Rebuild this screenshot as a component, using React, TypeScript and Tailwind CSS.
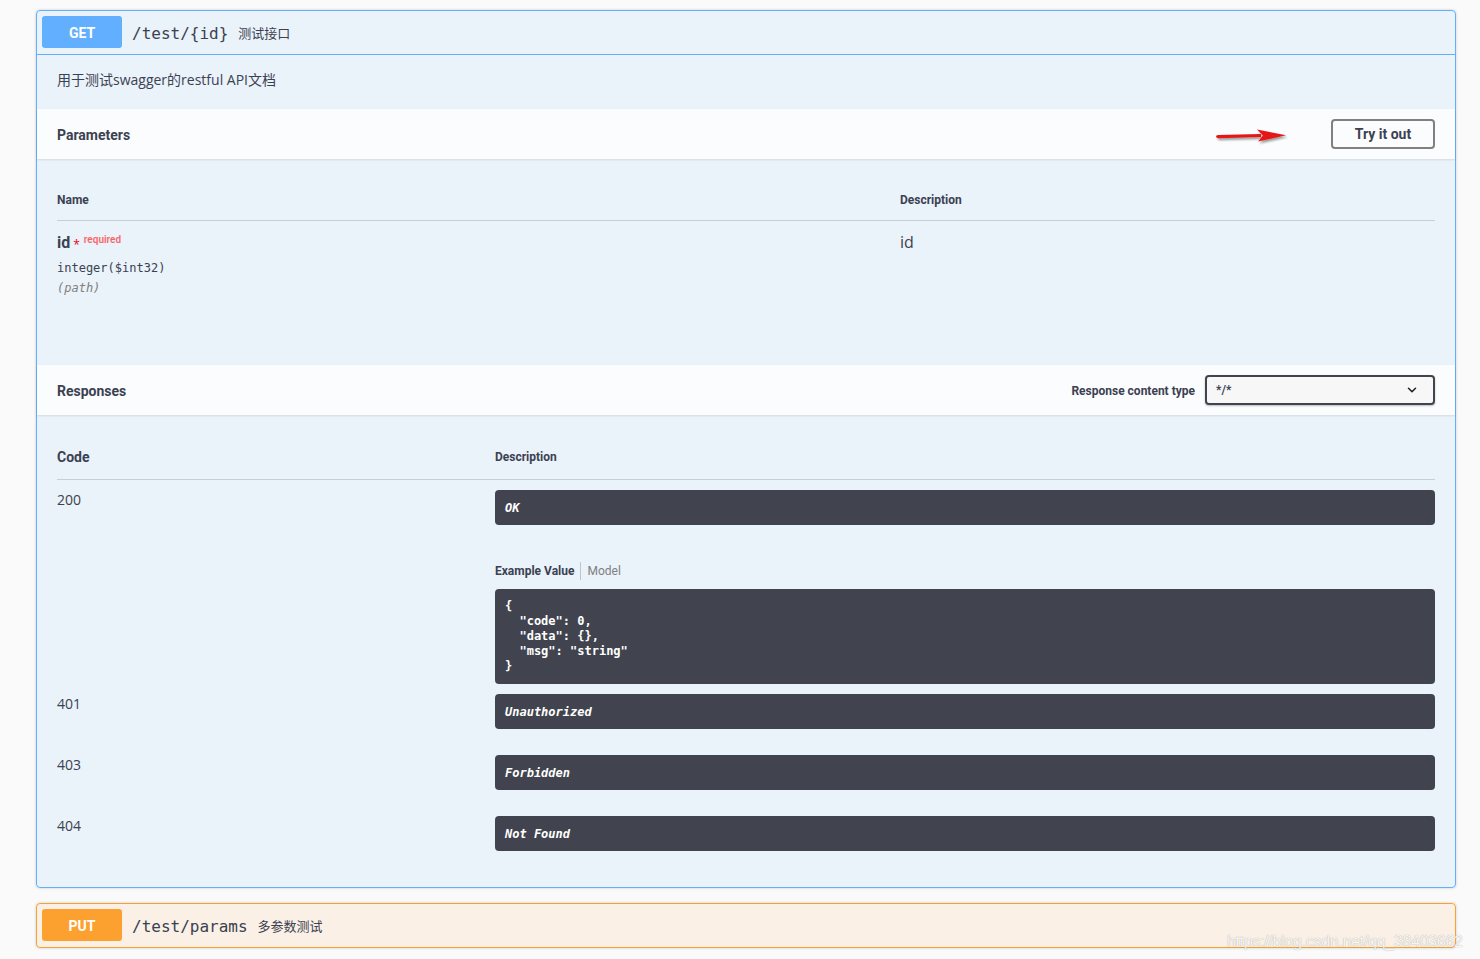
import React from "react";
import { ChevronDown } from "lucide-react";

const sans = "font-['Open_Sans','Noto_Sans_CJK_SC',sans-serif]";
const title = "font-['Roboto','Noto_Sans_CJK_SC',sans-serif]";
const mono = "font-['DejaVu_Sans_Mono',monospace]";

function RespBox({ text }: { text: string }) {
  return (
    <div className={`h-[35px] rounded-[4px] bg-[#41444e] px-[10px] flex items-center text-white text-[12px] font-bold italic ${mono}`}>
      {text}
    </div>
  );
}

function Arrow() {
  return (
    <svg width="76" height="20" viewBox="0 0 76 20" className="mr-[40px] mt-[6px]">
      <defs>
        <filter id="sh" x="-10%" y="-50%" width="130%" height="220%">
          <feDropShadow dx="1.5" dy="2" stdDeviation="1.2" floodColor="#000" floodOpacity="0.4" />
        </filter>
      </defs>
      <g filter="url(#sh)">
        <path d="M1 9.6 Q1 8.2 3 8 L46 7 L46 10 L3 11.2 Q1 11 1 9.6 Z" fill="#e51515" />
        <path d="M42 2.5 L71 8.2 L43 14.5 L48 8.6 Z" fill="#e51515" />
      </g>
    </svg>
  );
}

export default function App() {
  return (
    <div className={`relative min-h-[959px] overflow-hidden bg-[#fafafa] pl-[36px] pr-[24px] pt-[10px] text-[#3b4151] ${sans}`}>
      {/* GET block */}
      <div className="rounded-[4px] border border-[#61affe] bg-[#61affe]/10 shadow-[0_0_3px_rgba(0,0,0,0.19)]">
        <div className="flex items-center pt-[5px] pb-[6px] px-[5px] border-b border-[#61affe]">
          <span className={`w-[80px] h-[32px] pt-[3px] rounded-[3px] bg-[#61affe] text-white font-bold text-[14px] flex items-center justify-center ${title}`}>
            GET
          </span>
          <span className={`pl-[10px] pt-[3px] text-[16px] ${mono}`}>/test/{"{id}"}</span>
          <span className="pl-[10px] pt-[3px] text-[13px]">测试接口</span>
        </div>

        <div className="px-[20px] pt-[13px] pb-[17px] text-[14px] leading-[24px]">用于测试swagger的restful API文档</div>

        <div className="flex items-center min-h-[50px] px-[20px] py-[8px] bg-white/80 shadow-[0_1px_2px_rgba(0,0,0,0.1)]">
          <span className={`pt-[2px] text-[14px] font-bold ${title}`}>Parameters</span>
          <div className="ml-auto flex items-center">
            <Arrow />
            <button className={`w-[104px] h-[30px] rounded-[4px] border-2 border-[#808080] bg-transparent text-[14px] font-bold text-[#3b4151] ${title}`}>
              Try it out
            </button>
          </div>
        </div>

        <div className="h-[206px] px-[20px] pt-[21px]">
          <div className="flex border-b border-[#3b4151]/20 py-[12px]">
            <div className={`w-[843px] text-[12px] leading-[16px] font-bold ${title}`}>Name</div>
            <div className={`text-[12px] leading-[16px] font-bold ${title}`}>Description</div>
          </div>
          <div className="flex pt-[12px]">
            <div className="w-[843px]">
              <div className="flex items-start">
                <span className={`text-[16px] leading-[20px] font-bold ${title}`}>id</span>
                <span className="text-[12px] text-red-600 ml-[3px] mt-[3px]">*</span>
                <span className={`text-[10px] text-[#ff0000]/60 ml-[4px] -mt-[1px] font-semibold ${title}`}>required</span>
              </div>
              <div className={`text-[12px] leading-[16px] mt-[6px] ${mono}`}>integer($int32)</div>
              <div className={`text-[12px] leading-[16px] mt-[4px] italic text-[#808080] ${mono}`}>(path)</div>
            </div>
            <div className="text-[16px] leading-[20px] -mt-[1px]">id</div>
          </div>
        </div>

        <div className="flex items-center min-h-[50px] px-[20px] py-[8px] bg-white/80 shadow-[0_1px_2px_rgba(0,0,0,0.1)]">
          <span className={`pt-[2px] text-[14px] font-bold ${title}`}>Responses</span>
          <div className="ml-auto flex items-center">
            <span className={`pt-[2px] text-[12px] font-bold mr-[10px] ${title}`}>Response content type</span>
            <div className="w-[230px] h-[30px] rounded-[4px] border-2 border-[#41444e] bg-[#f7f7f7] shadow-[0_1px_2px_rgba(0,0,0,0.25)] flex items-center pl-[9px] pr-[14px]">
              <span className={`text-[12px] font-semibold ${title}`}>*/*</span>
              <ChevronDown className="ml-auto" size={14} strokeWidth={2.6} color="#1f2128" />
            </div>
          </div>
        </div>

        <div className="px-[20px] pt-[20px] pb-[36px]">
          <div className="flex items-center border-b border-[#3b4151]/20 py-[12px]">
            <div className={`w-[438px] text-[14px] leading-[20px] font-bold ${title}`}>Code</div>
            <div className={`text-[12px] leading-[16px] font-bold ${title}`}>Description</div>
          </div>

          <div className="flex pt-[10px]">
            <div className="w-[438px] text-[14px] leading-[20px]">200</div>
            <div className="flex-1">
              <RespBox text="OK" />
              <div className="mt-[38px] flex items-center h-[16px] text-[12px]">
                <span className={`font-bold ${title}`}>Example Value</span>
                <span className="mx-[6px] h-[18px] w-px bg-[#3b4151]/25" />
                <span className={`text-[#808080] ${title}`}>Model</span>
              </div>
              <pre className={`mt-[10px] h-[95px] rounded-[4px] bg-[#41444e] p-[10px] text-white text-[12px] leading-[15px] font-bold ${mono}`}>
{`{
  "code": 0,
  "data": {},
  "msg": "string"
}`}
              </pre>
            </div>
          </div>

          {["401:Unauthorized", "403:Forbidden", "404:Not Found"].map((r, i) => {
            const [code, text] = r.split(":");
            return (
              <div key={code} className={`flex pt-[10px] ${i < 2 ? "pb-[16px]" : ""}`}>
                <div className="w-[438px] text-[14px] leading-[20px]">{code}</div>
                <div className="flex-1">
                  <RespBox text={text} />
                </div>
              </div>
            );
          })}
        </div>
      </div>

      {/* PUT block */}
      <div className="mt-[15px] rounded-[4px] border border-[#fca130] bg-[#fca130]/10 shadow-[0_0_3px_rgba(0,0,0,0.19)]">
        <div className="flex items-center pt-[5px] pb-[6px] px-[5px]">
          <span className={`w-[80px] h-[32px] pt-[3px] rounded-[3px] bg-[#fca130] text-white font-bold text-[14px] flex items-center justify-center ${title}`}>
            PUT
          </span>
          <span className={`pl-[10px] pt-[3px] text-[16px] ${mono}`}>/test/params</span>
          <span className="pl-[10px] pt-[3px] text-[13px]">多参数测试</span>
        </div>
      </div>

      <div className="absolute left-[1227px] top-[930px] text-[16px] tracking-[-0.3px] font-['Liberation_Sans',sans-serif] text-white/90 [text-shadow:0_0_1px_rgba(0,0,0,0.4)] whitespace-nowrap">
        https://blog.csdn.net/qq_38403662
      </div>
    </div>
  );
}
